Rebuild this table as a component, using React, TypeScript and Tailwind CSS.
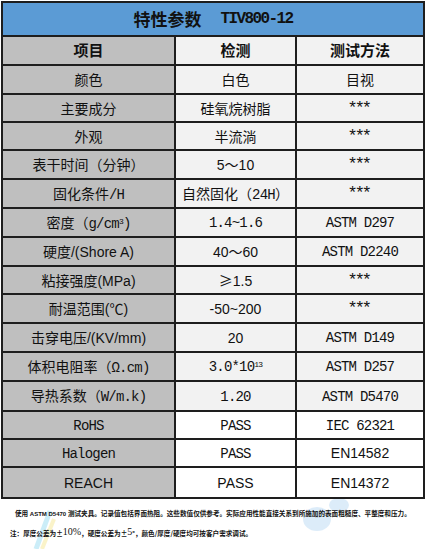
import React from "react";

const CJK = "font-['Noto_Sans_CJK_SC',sans-serif]";
const MONO = "font-['Liberation_Mono','Noto_Sans_CJK_SC',monospace] tracking-[-0.8px]";
const ARIAL = "font-['Liberation_Sans','Noto_Sans_CJK_SC',sans-serif]";

type Seg = { t: React.ReactNode; f?: "cjk" | "mono" | "arial" };

const M = (t: React.ReactNode): Seg => ({ t, f: "mono" });
const A = (t: React.ReactNode): Seg => ({ t, f: "arial" });
const C = (t: React.ReactNode): Seg => ({ t, f: "cjk" });

function Text({ segs }: { segs: Seg[] }) {
  return (
    <span className="whitespace-pre">
      {segs.map((s, i) => (
        <span
          key={i}
          className={s.f === "mono" ? MONO : s.f === "arial" ? ARIAL : CJK}
        >
          {s.t}
        </span>
      ))}
    </span>
  );
}

const STARS: Seg[] = [A(<span className="text-[17px] tracking-[0.5px] relative top-[-1px]">***</span>)];

const rows: { a: Seg[]; b: Seg[]; c: Seg[]; h: string; white?: boolean }[] = [
  { a: [C("颜色")], b: [C("白色")], c: [C("目视")], h: "h-[27px]" },
  { a: [C("主要成分")], b: [C("硅氧烷树脂")], c: STARS, h: "h-[26px]" },
  { a: [C("外观")], b: [C("半流淌")], c: STARS, h: "h-[26px]" },
  { a: [C("表干时间（分钟）")], b: [A("5"), C("～"), A("10")], c: STARS, h: "h-[27px]" },
  { a: [C("固化条件"), M("/H")], b: [C("自然固化（"), M("24H"), C("）")], c: STARS, h: "h-[27px]" },
  {
    a: [C("密度（"), M(<>g/cm<sup className="text-[8px]">3</sup>)</>)],
    b: [M("1.4~1.6")],
    c: [M("ASTM D297")],
    h: "h-[27px]",
  },
  { a: [C("硬度"), A("/(Shore A)")], b: [A("40"), C("～"), A("60")], c: [M("ASTM D2240")], h: "h-[27px]" },
  { a: [C("粘接强度"), A("(MPa)")], b: [C("≥"), A("1.5")], c: STARS, h: "h-[26px]" },
  { a: [C("耐温范围"), A("(℃)")], b: [A("-50~200")], c: STARS, h: "h-[27px]" },
  { a: [C("击穿电压"), A("/(KV/mm)")], b: [A("20")], c: [M("ASTM D149")], h: "h-[27px]" },
  {
    a: [C("体积电阻率（"), M("Ω.cm)")],
    b: [M(<>3.0*10<sup className="text-[8px]">13</sup></>)],
    c: [M("ASTM D257")],
    h: "h-[27px]",
  },
  { a: [C("导热系数（"), M("W/m.k)")], b: [M("1.20")], c: [M("ASTM D5470")], h: "h-[28px]" },
  { a: [M("RoHS")], b: [M("PASS")], c: [M("IEC 62321")], h: "h-[26px]", white: true },
  { a: [M("Halogen")], b: [M("PASS")], c: [A("EN14582")], h: "h-[26px]", white: true },
  { a: [A("REACH")], b: [A("PASS")], c: [A("EN14372")], h: "h-[29px]", white: true },
];

export default function App() {
  return (
    <div className="w-[426px] h-[549px] bg-white relative overflow-hidden text-[#111]">
      {/* faint watermark */}
      <svg className="absolute left-[30px] top-[505px] opacity-40" width="40" height="44" viewBox="0 0 40 44">
        <path d="M6 44 L20 6" stroke="#7fd3f0" strokeWidth="5" fill="none" />
        <path d="M12 44 L24 14" stroke="#f4e27a" strokeWidth="4" fill="none" />
      </svg>
      <svg className="absolute left-[295px] top-[493px] opacity-30" width="60" height="42" viewBox="0 0 60 42">
        <ellipse cx="22" cy="26" rx="14" ry="12" fill="#8fc3ee" />
        <ellipse cx="44" cy="12" rx="10" ry="7" fill="#8fc3ee" />
      </svg>

      <div className="absolute left-[1px] top-[1px] w-[424px] bg-[#1e1e1e] p-[2px] grid grid-cols-[171px_119px_126px] gap-[2px]">
        <div className="col-span-3 h-[32px] bg-[#5b9bd5] flex items-center justify-center font-bold text-[17px]">
          <span className={CJK}>特性参数</span>
          <span className="font-['Liberation_Mono',monospace] text-[16px] tracking-[-1.6px] ml-[19px]">TIV800-12</span>
        </div>

        <div className={`h-[27px] bg-[#bfbfbf] flex items-center justify-center font-bold text-[15px] ${CJK}`}>项目</div>
        <div className={`h-[27px] bg-[#f2f2f2] flex items-center justify-center font-bold text-[15px] ${CJK}`}>检测</div>
        <div className={`h-[27px] bg-[#f2f2f2] flex items-center justify-center font-bold text-[15px] ${CJK}`}>测试方法</div>

        {rows.map((r, i) => (
          <React.Fragment key={i}>
            <div className={`${r.h} bg-[#bfbfbf] flex items-center justify-center text-[14px] leading-none`}>
              <Text segs={r.a} />
            </div>
            <div className={`${r.h} ${r.white ? "bg-white" : "bg-[#f2f2f2]"} flex items-center justify-center text-[14px] leading-none`}>
              <Text segs={r.b} />
            </div>
            <div className={`${r.h} ${r.white ? "bg-white" : "bg-[#f2f2f2]"} flex items-center justify-center text-[14px] leading-none`}>
              <Text segs={r.c} />
            </div>
          </React.Fragment>
        ))}
      </div>

      <div className={`absolute left-[15px] top-[510px] text-[6.6px] font-bold leading-none whitespace-nowrap ${CJK}`}>
        使用<span className="font-['Liberation_Sans',sans-serif] text-[6px]"> ASTM D5470 </span>测试夹具。记录值包括界面热阻。这些数值仅供参考。实际应用性能直接关系到所施加的表面粗糙度、平整度和压力。
      </div>
      <div className={`absolute left-[10px] top-[527px] text-[6.6px] font-bold leading-none whitespace-nowrap flex items-end ${CJK}`}>
        <span>注：厚度公差为±</span>
        <span className="font-['Liberation_Serif',serif] font-normal text-[10px]">10%</span>
        <span>，硬度公差为±</span>
        <span className="font-['Liberation_Serif',serif] font-normal text-[10px]">5</span>
        <span>°，颜色/厚度/硬度均可按客户需求调试。</span>
      </div>
    </div>
  );
}
